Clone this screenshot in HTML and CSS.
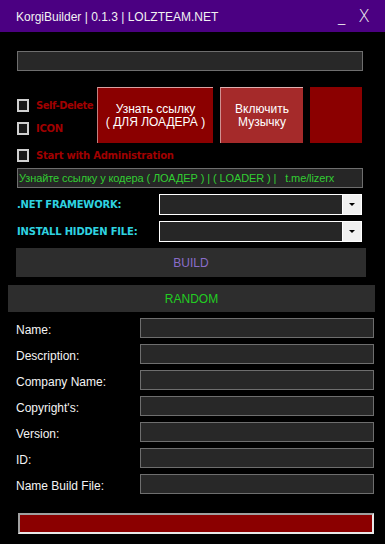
FILE: index.html
```html
<!DOCTYPE html>
<html>
<head>
<meta charset="utf-8">
<link rel="stylesheet" href="styles.css">
</head>
<body>
<div class="window">
  <div class="titlebar">
    <span class="title">KorgiBuilder | 0.1.3 | LOLZTEAM.NET</span>
    <span class="controls"><span class="min">_</span><span class="close">X</span></span>
  </div>
  <div class="content">
    <div class="textbox top-input"></div>
    <div class="action-row">
      <div class="checks">
        <label class="check"><span class="box"></span><span class="red-label tight">Self-Delete</span></label>
        <label class="check"><span class="box"></span><span class="red-label">ICON</span></label>
      </div>
      <div class="btn btn-link">Узнать ссылку<br>( ДЛЯ ЛОАДЕРА )</div>
      <div class="btn btn-music">Включить<br>Музычку</div>
      <div class="btn btn-blank"></div>
    </div>
    <label class="check admin"><span class="box"></span><span class="red-label">Start with Administration</span></label>
    <div class="green-box">Узнайте ссылку у кодера ( ЛОАДЕР ) | ( LOADER ) |&nbsp;&nbsp; t.me/lizerx</div>
    <div class="combo-row">
      <span class="cyan-label">.NET FRAMEWORK:</span>
      <div class="combo"><div class="combo-field"></div><div class="combo-arrow"><span class="tri"></span></div></div>
    </div>
    <div class="combo-row">
      <span class="cyan-label">INSTALL HIDDEN FILE:</span>
      <div class="combo"><div class="combo-field"></div><div class="combo-arrow"><span class="tri"></span></div></div>
    </div>
    <div class="build">BUILD</div>
  </div>
  <div class="random">RANDOM</div>
  <div class="fields">
    <span class="flabel">Name:</span><div class="textbox field"></div>
    <span class="flabel">Description:</span><div class="textbox field"></div>
    <span class="flabel">Company Name:</span><div class="textbox field"></div>
    <span class="flabel">Copyright's:</span><div class="textbox field"></div>
    <span class="flabel">Version:</span><div class="textbox field"></div>
    <span class="flabel">ID:</span><div class="textbox field"></div>
    <span class="flabel">Name Build File:</span><div class="textbox field"></div>
  </div>
  <div class="progress"></div>
</div>
</body>
</html>
```

FILE: styles.css
```css
* { box-sizing: border-box; }
html, body { margin: 0; padding: 0; background: #000; }
.window {
  width: 385px;
  height: 544px;
  background: #000;
  font-family: "Liberation Sans", Arial, sans-serif;
  color: #fff;
  overflow: hidden;
}
.titlebar {
  height: 32px;
  background: #4b0082;
  display: flex;
  align-items: center;
  justify-content: space-between;
  padding: 0 15px 0 16px;
}
.title {
  font-size: 12px;
  color: #f2f2f2;
  margin-top: 1px;
}
.controls {
  display: flex;
  align-items: center;
  gap: 13px;
  color: #f0f0f0;
}
.min { font-size: 13px; margin-top: 3px; }
.close { font-size: 17px; font-family: "DejaVu Sans", sans-serif; font-weight: 300; }
.content {
  padding: 19px 22px 0 17px;
  display: flex;
  flex-direction: column;
}
.textbox {
  background: #282828;
  border: 1px solid #6e6e6e;
}
.top-input {
  width: 346px;
  height: 20px;
}
.action-row {
  display: flex;
  margin-top: 16px;
  height: 56px;
}
.checks {
  width: 80px;
  flex: none;
  display: flex;
  flex-direction: column;
  padding-top: 12px;
  gap: 10px;
}
.check {
  display: flex;
  align-items: center;
  gap: 7px;
  height: 13px;
  white-space: nowrap;
}
.box {
  width: 12px;
  height: 13px;
  border: 2px solid #d0d0d0;
  background: #1a1a1a;
  flex: none;
}
.red-label {
  font-family: "DejaVu Sans", Verdana, sans-serif;
  font-weight: bold;
  font-size: 10px;
  color: #a00000;
  letter-spacing: -0.25px;
  white-space: nowrap;
}
.red-label.tight { letter-spacing: -0.5px; }
.btn {
  height: 56px;
  flex: none;
  color: #fff;
  font-size: 12px;
  line-height: 13px;
  text-align: center;
  display: flex;
  align-items: center;
  justify-content: center;
}
.btn-link {
  width: 116px;
  background: #8b0000;
  border-top: 1px solid #d9a0a0;
  border-left: 1px solid #c08080;
}
.btn-music {
  width: 83px;
  margin-left: 7px;
  background: #a52a2a;
  border-top: 1px solid #e0b0b0;
  border-left: 1px solid #d09090;
}
.btn-blank {
  width: 52px;
  margin-left: 7px;
  background: #8b0000;
}
.admin { margin-top: 6px; }
.green-box {
  margin-top: 6px;
  width: 346px;
  height: 20px;
  background: #262626;
  border: 1px solid #6e6e6e;
  color: #32cd32;
  font-size: 11px;
  letter-spacing: -0.1px;
  line-height: 18px;
  padding-left: 1px;
  white-space: nowrap;
  overflow: hidden;
}
.combo-row {
  display: flex;
  align-items: center;
  height: 21px;
  margin-top: 6px;
}
.cyan-label {
  width: 142px;
  font-family: "DejaVu Sans", Verdana, sans-serif;
  font-weight: bold;
  font-size: 10px;
  color: #2fd3e0;
  letter-spacing: -0.2px;
}
.combo {
  width: 203px;
  height: 21px;
  display: flex;
  border: 1px solid #fff;
  background: #f0f0f0;
}
.combo-field {
  flex: 1;
  background: #262626;
  border-right: 1px solid #fff;
}
.combo-arrow {
  width: 18px;
  display: flex;
  align-items: center;
  justify-content: center;
}
.tri {
  width: 0;
  height: 0;
  border-left: 3px solid transparent;
  border-right: 3px solid transparent;
  border-top: 3px solid #000;
}
.build {
  margin-top: 6px;
  margin-left: -1px;
  width: 350px;
  height: 29px;
  background: #2d2d2d;
  color: #8a6cc8;
  font-size: 12px;
  display: flex;
  align-items: center;
  justify-content: center;
}
.random {
  margin: 8px 10px 0 8px;
  height: 27px;
  background: #2d2d2d;
  color: #22cc22;
  font-size: 12px;
  display: flex;
  align-items: center;
  justify-content: center;
}
.fields {
  display: grid;
  grid-template-columns: 124px 234px;
  grid-auto-rows: 20px;
  row-gap: 6px;
  margin: 6px 0 0 16px;
  align-items: center;
}
.flabel {
  font-size: 12px;
  color: #f4f4f4;
  margin-top: 4px;
}
.field { height: 20px; }
.progress {
  margin: 19px 11px 0 18px;
  height: 21px;
  background: #8b0000;
  border: 2px solid #e8e8e8;
  border-top-color: #a0a0a0;
  border-left-color: #a0a0a0;
}
```
